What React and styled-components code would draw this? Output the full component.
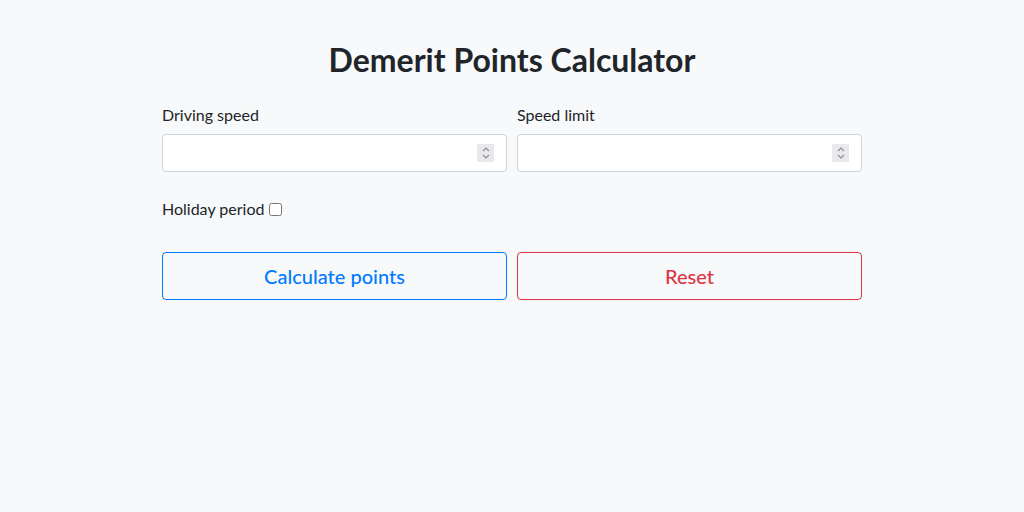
import React, { useState } from 'react'
import styled, { createGlobalStyle } from 'styled-components'

const GlobalStyle = createGlobalStyle`
  html, body {
    margin: 0;
    padding: 0;
    background: #f8f9fa;
    color: #212529;
    font-family: Lato, "Noto Sans", sans-serif;
  }
  * { box-sizing: border-box; }
`

function NumberInput({ id, value, onChange }) {
  return (
    <InputWrap>
      <Input id={id} type='number' value={value} onChange={onChange} />
      <Spinner>
        <svg width='10' height='14' viewBox='0 0 10 14' fill='none' stroke='#8d8d96' strokeWidth='1.2'>
          <path d='M2 5l3-3 3 3' />
          <path d='M2 9l3 3 3-3' />
        </svg>
      </Spinner>
    </InputWrap>
  )
}

export default function App() {
  const [speed, setSpeed] = useState('')
  const [limit, setLimit] = useState('')
  const [holiday, setHoliday] = useState(false)

  return (
    <Page>
      <GlobalStyle />
      <Container>
        <Title>Demerit Points Calculator</Title>
        <Row>
          <Field>
            <Label htmlFor='speed'>Driving speed</Label>
            <NumberInput id='speed' value={speed} onChange={e => setSpeed(e.target.value)} />
          </Field>
          <Field>
            <Label htmlFor='limit'>Speed limit</Label>
            <NumberInput id='limit' value={limit} onChange={e => setLimit(e.target.value)} />
          </Field>
        </Row>
        <CheckRow>
          <label htmlFor='holiday'>Holiday period</label>
          <Checkbox id='holiday' type='checkbox' checked={holiday} onChange={e => setHoliday(e.target.checked)} />
        </CheckRow>
        <Row>
          <Button $color='#007bff'>Calculate points</Button>
          <Button $color='#dc3545'>Reset</Button>
        </Row>
      </Container>
    </Page>
  )
}

const Page = styled.div`
  min-height: 512px;
  padding-top: 38px;
`

const Container = styled.div`
  width: 700px;
  margin: 0 auto;
`

const Title = styled.h1`
  margin: 0 0 21px;
  text-align: center;
  font-size: 32px;
  font-weight: 700;
  line-height: 44px;
`

const Row = styled.div`
  display: grid;
  grid-template-columns: 1fr 1fr;
  gap: 10px;
`

const Field = styled.div`
  display: flex;
  flex-direction: column;
`

const Label = styled.label`
  font-size: 16px;
  line-height: 24px;
  margin-bottom: 7px;
`

const InputWrap = styled.div`
  position: relative;
`

const Input = styled.input`
  display: block;
  width: 100%;
  height: 38px;
  padding: 6px 36px 6px 12px;
  font-size: 16px;
  font-family: inherit;
  border: 1px solid #ced4da;
  border-radius: 4px;
  background: #fff;
  outline: none;
  -moz-appearance: textfield;
  &::-webkit-inner-spin-button,
  &::-webkit-outer-spin-button {
    -webkit-appearance: none;
    margin: 0;
  }
`

const Spinner = styled.div`
  position: absolute;
  top: 10px;
  right: 13px;
  width: 17px;
  height: 18px;
  display: flex;
  align-items: center;
  justify-content: center;
  background: #e9e9ed;
  pointer-events: none;
`

const CheckRow = styled.div`
  display: flex;
  align-items: center;
  gap: 5px;
  margin: 25px 0 31px;
  font-size: 16px;
  line-height: 24px;
`

const Checkbox = styled.input`
  width: 13px;
  height: 13px;
  margin: 0;
`

const Button = styled.button`
  height: 48px;
  font-size: 20px;
  font-family: inherit;
  font-weight: 500;
  color: ${p => p.$color};
  background: transparent;
  border: 1px solid ${p => p.$color};
  border-radius: 4px;
  cursor: pointer;
`
